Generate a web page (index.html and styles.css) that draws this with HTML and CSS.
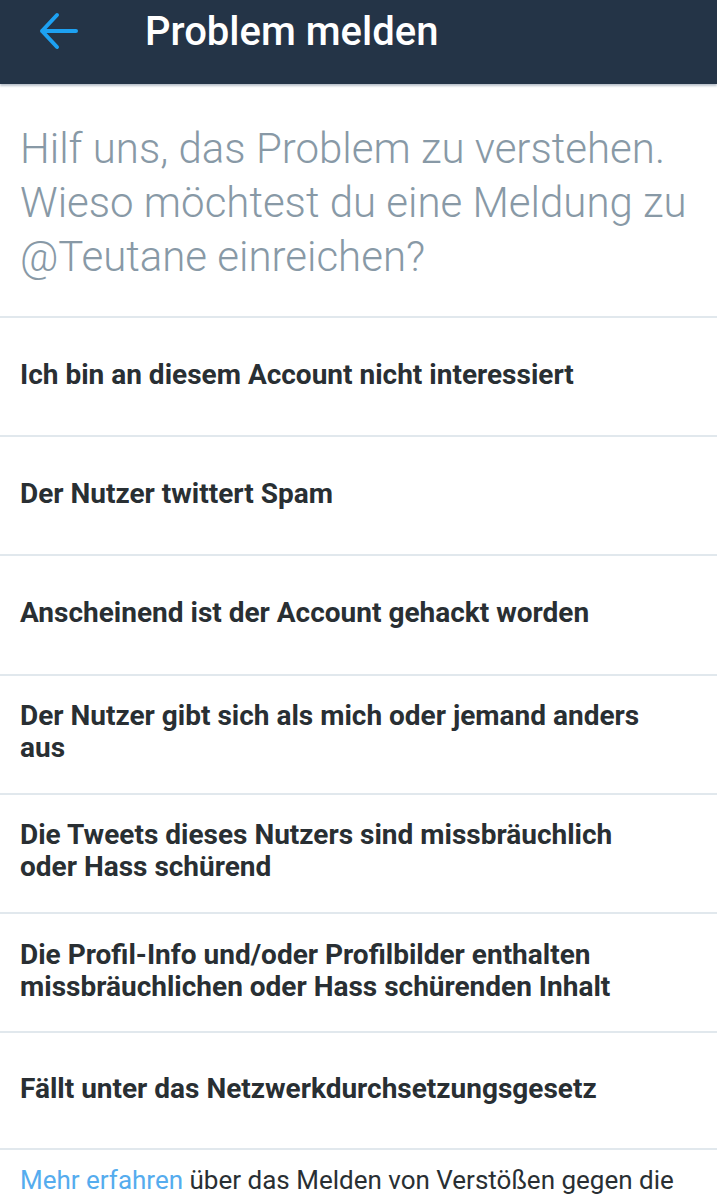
FILE: index.html
```html
<!DOCTYPE html>
<html>
<head>
    <title>Problem melden</title>
    <link rel="stylesheet" href="styles.css">
</head>
<body>
    <div class="topbar">
        <svg class="back" width="40" height="38" viewBox="0 0 40 38">
            <path d="M38 19H4 M19 3L4 19L19 35" fill="none" stroke="#1da1f2" stroke-width="4" stroke-linecap="round" stroke-linejoin="round"/>
        </svg>
        <h1>Problem melden</h1>
    </div>

    <p class="intro">Hilf uns, das Problem zu verstehen. Wieso möchtest du eine Meldung zu @Teutane einreichen?</p>

    <ul class="options">
        <li>Ich bin an diesem Account nicht interessiert</li>
        <li>Der Nutzer twittert Spam</li>
        <li>Anscheinend ist der Account gehackt worden</li>
        <li>Der Nutzer gibt sich als mich oder jemand anders aus</li>
        <li>Die Tweets dieses Nutzers sind missbräuchlich oder Hass schürend</li>
        <li>Die Profil-Info und/oder Profilbilder enthalten missbräuchlichen oder Hass schürenden Inhalt</li>
        <li>Fällt unter das Netzwerkdurchsetzungsgesetz</li>
    </ul>

    <p class="more"><a href="#">Mehr erfahren</a> über das Melden von Verstößen gegen die Twitter Regeln.</p>
</body>
</html>
```

FILE: styles.css
```css
body {
    font-family: Roboto, "Liberation Sans", sans-serif;
    margin: 0;
    background: #fff;
    overflow: hidden;
}
.topbar {
    height: 84px;
    background-color: #243447;
    display: flex;
    align-items: flex-start;
    box-shadow: 0 2px 2px rgba(60, 80, 110, 0.35);
}
.back {
    margin: 12px 0 0 38px;
}
.topbar h1 {
    margin: 12px 0 0 67px;
    color: #fff;
    font-size: 40px;
    font-weight: 500;
    line-height: 40px;
}
.intro {
    margin: 0;
    padding: 38px 20px 32px;
    font-size: 42px;
    font-weight: 300;
    line-height: 54px;
    color: #8899a6;
}
.options {
    list-style: none;
    margin: 0;
    padding: 0;
}
.options li {
    box-sizing: border-box;
    min-height: 119.2px;
    border-top: 2px solid #e1e8ed;
    padding: 0 60px 4px 20px;
    display: flex;
    align-items: center;
    font-size: 28px;
    font-weight: bold;
    line-height: 32px;
    color: #292f33;
}
.options li:last-child {
    border-bottom: 2px solid #e1e8ed;
}
.more {
    margin: 0;
    padding: 14px 20px;
    font-size: 26px;
    line-height: 32px;
    color: #292f33;
}
.more a {
    color: #55acee;
    text-decoration: none;
}
```
